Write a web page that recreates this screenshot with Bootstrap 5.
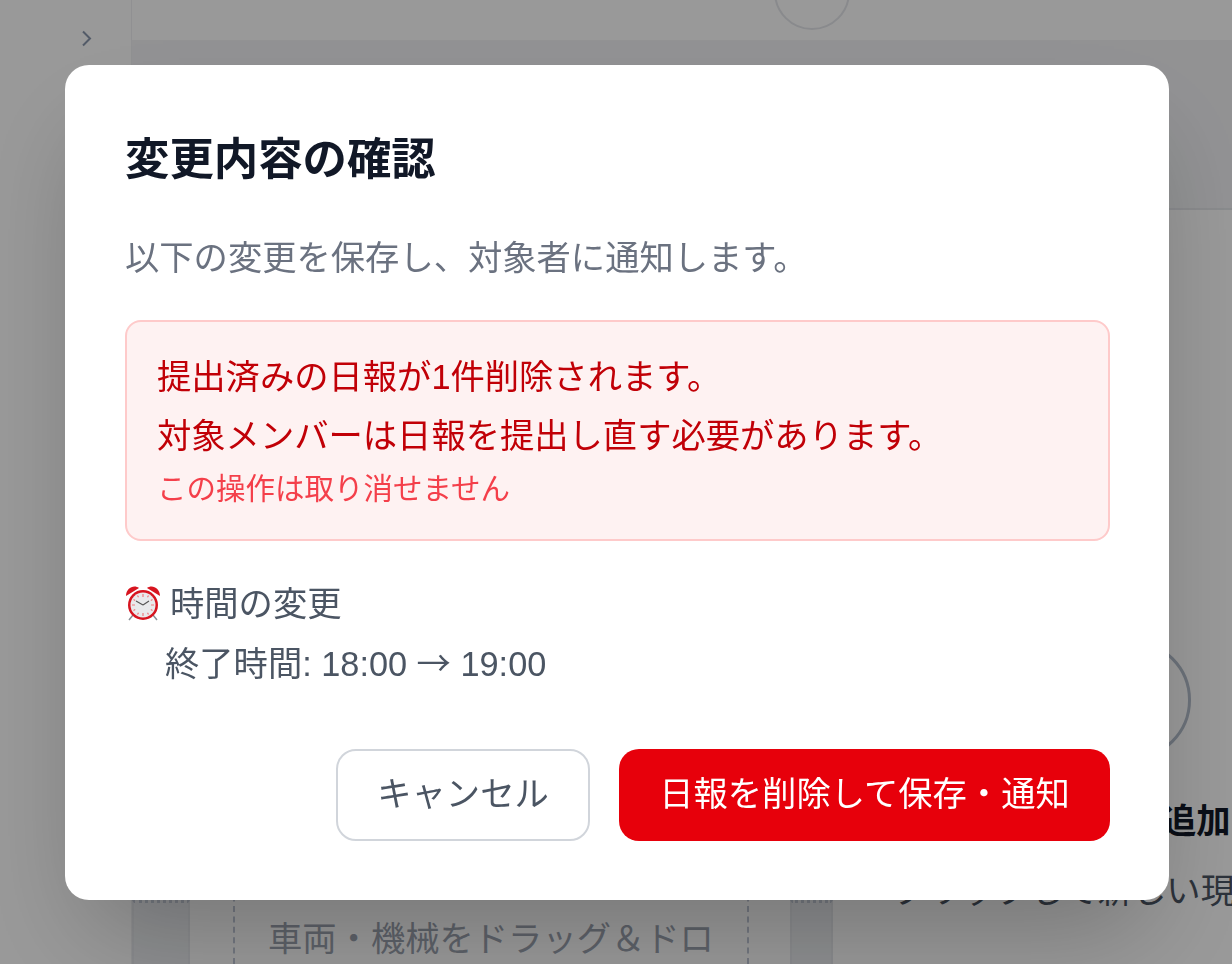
<!DOCTYPE html>
<html lang="ja"><head><meta charset="utf-8">
<link href="https://cdn.jsdelivr.net/npm/bootstrap@5.3.0/dist/css/bootstrap.min.css" rel="stylesheet">
<style>
html,body{height:100%;overflow:hidden}
body{font-family:"Liberation Sans","Noto Sans CJK JP",sans-serif;background:#fff;color:#4b5563}
.stage{height:964px;width:1232px;overflow:hidden}
.sidebar-bg{width:132px;flex:none;background:#fff;border-right:1px solid #f0f1f3;padding:25px 0 0 81px}
.topbar-bg{height:40px;background:#fff;display:flex;justify-content:center;padding-left:260px;overflow:hidden}
.avatar-bg{width:76px;height:76px;flex:none;border:2px solid #e5e7eb;border-radius:50%;margin-top:-46px}
.band-bg{height:170px;background:#f3f4f6;border-bottom:2px solid #e5e7eb}
.lower-bg{height:754px;background:#f9fafb}
.gutter-a{width:58px;flex:none;background:#f3f4f6;display:flex;align-items:flex-end}
.slot-bg{flex:1;height:64px;border-top:3px dotted #c3cad6;border-left:2px solid #e5e7eb;border-right:2px solid #e5e7eb;background:#eceef1}
.panel-a{width:600px;flex:none;background:#fff;padding:0 41px 0 43px;display:flex;align-items:flex-end}
.drop-bg{flex:1;border-left:2px dashed #c0c7d6;border-right:2px dashed #c0c7d6;height:110px;padding:60px 32px 0 33px;font-size:34.3px;line-height:51px;overflow:hidden;color:#9ca3af}
.gutter-b{width:43px;flex:none;background:#f3f4f6;display:flex;align-items:flex-end}
.panel-b{flex:1;background:#fff;position:relative;white-space:nowrap;overflow:hidden}
.ring-bg{position:absolute;left:238px;top:430px;width:120px;height:120px;border:3px solid #b3bdcb;border-radius:50%}
.add-bg{position:absolute;left:226px;top:586px;font-size:34.3px;font-weight:700;color:#111827}
.hint-bg{position:absolute;left:60px;top:656px;font-size:34.3px;color:#4b5563}
.veil{position:fixed;inset:0;background:rgba(0,0,0,.4)}
.dlg{position:fixed;left:65px;top:65px;width:1104px;height:835px;background:#fff;border-radius:24px;padding:60px 59px 60px 60px;box-shadow:0 50px 100px -24px rgba(0,0,0,.25)}
.dlg-title{font-size:44.4px;font-weight:700;color:#111827;line-height:64px;margin:3px 0 0}
.dlg-sub{font-size:34.3px;line-height:48px;color:#6b7280;margin:42px 0 0}
.warn{margin-top:38px;height:221px;background:#fef2f2;border:2px solid #fecaca;border-radius:16px;padding:26px 30px 0;color:#c10007}
.warn-line{font-size:34.3px;line-height:59px;white-space:nowrap}
.warn-small{font-size:29.5px;line-height:46px;color:#f43f4a}
.chg{font-size:34.3px;margin-top:33px;color:#4b5563}
.chg-row{height:60px;line-height:60px;white-space:nowrap}
.chg-detail{padding-left:40px}
.arrow-cjk{font-family:"Noto Sans CJK JP",sans-serif;line-height:1}
.clock{width:36px;height:36px;vertical-align:-5px;margin-right:9px}
.actions{margin-top:55px;gap:29px}
.btn-dlg{height:92px;border-radius:20px;font-size:34.3px;padding:0;white-space:nowrap}
.btn-ghost{background:#fff;border:2px solid #d1d5db;color:#4b5563;width:254px}
.btn-del{background:#e7000b;border:0;color:#fff;width:491px}
</style></head><body>
<div class="stage d-flex">
  <aside class="sidebar-bg"><svg width="12" height="24" viewBox="0 0 12 24"><path d="M2 5.500l7 7-7 7" fill="none" stroke="#8b98ae" stroke-width="2"/></svg></aside>
  <main class="flex-grow-1 d-flex flex-column">
    <div class="topbar-bg"><div class="avatar-bg"></div></div>
    <div class="band-bg"></div>
    <div class="lower-bg d-flex">
      <div class="gutter-a"><div class="slot-bg"></div></div>
      <div class="panel-a"><div class="drop-bg">車両・機械をドラッグ&#xFF06;ドロップ</div></div>
      <div class="gutter-b"><div class="slot-bg"></div></div>
      <div class="panel-b"><div class="ring-bg"></div><div class="add-bg">現場を追加</div><div class="hint-bg">クリックして新しい現場を追加</div></div>
    </div>
  </main>
</div>
<div class="veil"></div>
<div class="dlg">
  <h2 class="dlg-title">変更内容の確認</h2>
  <p class="dlg-sub">以下の変更を保存し、対象者に通知します。</p>
  <div class="warn">
    <div class="warn-line">提出済みの日報が1件削除されます。</div>
    <div class="warn-line">対象メンバーは日報を提出し直す必要があります。</div>
    <div class="warn-small">この操作は取り消せません</div>
  </div>
  <div class="chg">
    <div class="chg-row"><svg class="clock" viewBox="0 0 36 36"><path d="M8 30l-4 5M28 30l4 5" stroke="#8a8f96" stroke-width="1.500"/><path d="M1 11C1 3 9-1 14 3zM35 11C35 3 27-1 22 3z" fill="#d7141f"/><circle cx="18" cy="20" r="15" fill="#d7141f"/><circle cx="18" cy="20" r="12.500" fill="#e9eaec"/><path d="M18 9v3M18 28v3M7 20h3M26 20h3M12.500 10.500l1 1.700M23.500 10.500l-1 1.700M8.500 14.500l1.700 1M27.500 14.500l-1.700 1M8.500 25.500l1.700-1M27.500 25.500l-1.700-1M12.500 29.500l1-1.700M23.500 29.500l-1-1.700" stroke="#ef7a7f" stroke-width="1.200"/><path d="M18 20l-7-4M18 20l6-4" stroke="#555" stroke-width="1.100"/></svg>時間の変更</div>
    <div class="chg-row chg-detail">終了時間: 18:00 <span class="arrow-cjk">→</span> 19:00</div>
  </div>
  <div class="actions d-flex justify-content-end">
    <button type="button" class="btn btn-dlg btn-ghost">キャンセル</button>
    <button type="button" class="btn btn-dlg btn-del">日報を削除して保存・通知</button>
  </div>
</div>
<script src="https://cdn.jsdelivr.net/npm/bootstrap@5.3.0/dist/js/bootstrap.bundle.min.js"></script>
</body></html>
